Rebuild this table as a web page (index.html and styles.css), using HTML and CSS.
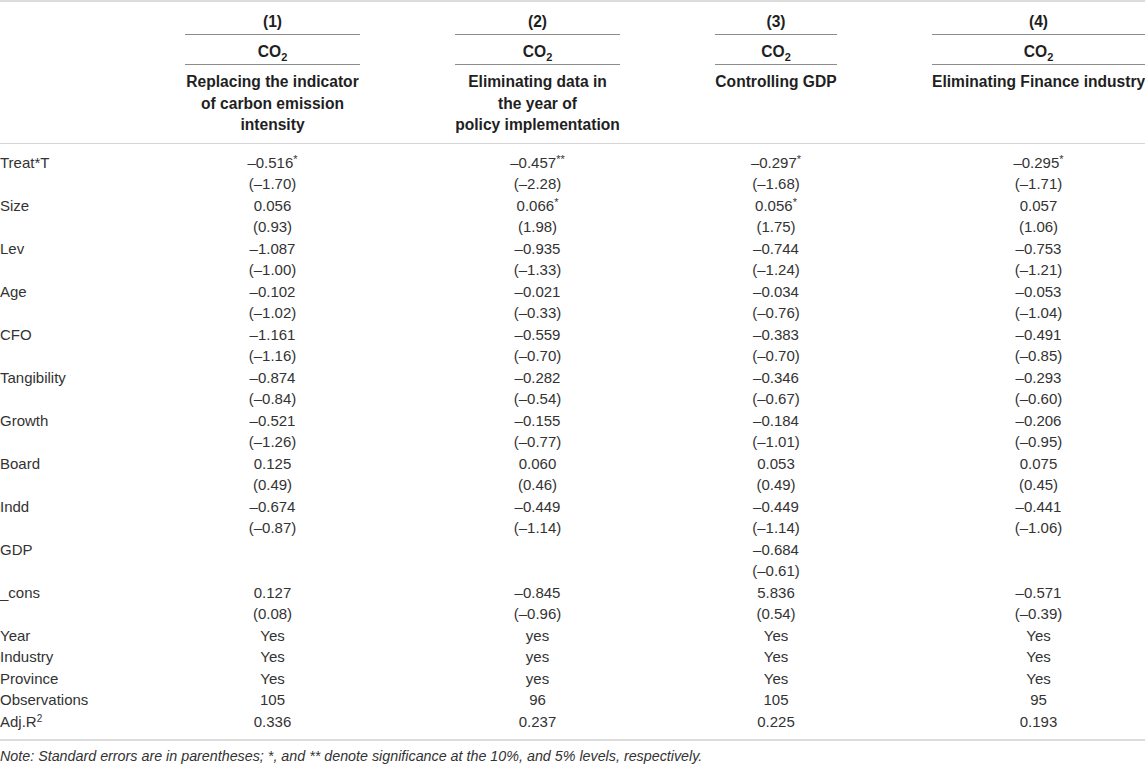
FILE: index.html
```
<!DOCTYPE html>
<html lang="en">
    <head>
        <meta charset="UTF-8">
        <title>Robustness tests</title>
        <link rel="stylesheet" href="styles.css">
    </head>
    <body>
        <div class="tbl">
            <div class="head">
                <div></div>
                <div class="num">(1)</div>
                <div class="num">(2)</div>
                <div class="num">(3)</div>
                <div class="num">(4)</div>

                <div></div>
                <div class="dep">CO<sub>2</sub></div>
                <div class="dep">CO<sub>2</sub></div>
                <div class="dep">CO<sub>2</sub></div>
                <div class="dep">CO<sub>2</sub></div>

                <div></div>
                <div class="lbl">Replacing the indicator<br>of carbon emission<br>intensity</div>
                <div class="lbl">Eliminating data in<br>the year of<br>policy implementation</div>
                <div class="lbl">Controlling GDP</div>
                <div class="lbl">Eliminating Finance industry</div>
            </div>

            <div class="body">
                <div class="stub">Treat*T</div><div>–0.516<sup>*</sup></div><div>–0.457<sup>**</sup></div><div>–0.297<sup>*</sup></div><div>–0.295<sup>*</sup></div>
                <div class="stub"></div><div>(–1.70)</div><div>(–2.28)</div><div>(–1.68)</div><div>(–1.71)</div>
                <div class="stub">Size</div><div>0.056</div><div>0.066<sup>*</sup></div><div>0.056<sup>*</sup></div><div>0.057</div>
                <div class="stub"></div><div>(0.93)</div><div>(1.98)</div><div>(1.75)</div><div>(1.06)</div>
                <div class="stub">Lev</div><div>–1.087</div><div>–0.935</div><div>–0.744</div><div>–0.753</div>
                <div class="stub"></div><div>(–1.00)</div><div>(–1.33)</div><div>(–1.24)</div><div>(–1.21)</div>
                <div class="stub">Age</div><div>–0.102</div><div>–0.021</div><div>–0.034</div><div>–0.053</div>
                <div class="stub"></div><div>(–1.02)</div><div>(–0.33)</div><div>(–0.76)</div><div>(–1.04)</div>
                <div class="stub">CFO</div><div>–1.161</div><div>–0.559</div><div>–0.383</div><div>–0.491</div>
                <div class="stub"></div><div>(–1.16)</div><div>(–0.70)</div><div>(–0.70)</div><div>(–0.85)</div>
                <div class="stub">Tangibility</div><div>–0.874</div><div>–0.282</div><div>–0.346</div><div>–0.293</div>
                <div class="stub"></div><div>(–0.84)</div><div>(–0.54)</div><div>(–0.67)</div><div>(–0.60)</div>
                <div class="stub">Growth</div><div>–0.521</div><div>–0.155</div><div>–0.184</div><div>–0.206</div>
                <div class="stub"></div><div>(–1.26)</div><div>(–0.77)</div><div>(–1.01)</div><div>(–0.95)</div>
                <div class="stub">Board</div><div>0.125</div><div>0.060</div><div>0.053</div><div>0.075</div>
                <div class="stub"></div><div>(0.49)</div><div>(0.46)</div><div>(0.49)</div><div>(0.45)</div>
                <div class="stub">Indd</div><div>–0.674</div><div>–0.449</div><div>–0.449</div><div>–0.441</div>
                <div class="stub"></div><div>(–0.87)</div><div>(–1.14)</div><div>(–1.14)</div><div>(–1.06)</div>
                <div class="stub">GDP</div><div></div><div></div><div>–0.684</div><div></div>
                <div class="stub"></div><div></div><div></div><div>(–0.61)</div><div></div>
                <div class="stub">_cons</div><div>0.127</div><div>–0.845</div><div>5.836</div><div>–0.571</div>
                <div class="stub"></div><div>(0.08)</div><div>(–0.96)</div><div>(0.54)</div><div>(–0.39)</div>
                <div class="stub">Year</div><div>Yes</div><div>yes</div><div>Yes</div><div>Yes</div>
                <div class="stub">Industry</div><div>Yes</div><div>yes</div><div>Yes</div><div>Yes</div>
                <div class="stub">Province</div><div>Yes</div><div>yes</div><div>Yes</div><div>Yes</div>
                <div class="stub">Observations</div><div>105</div><div>96</div><div>105</div><div>95</div>
                <div class="stub">Adj.R<sup class="pow">2</sup></div><div>0.336</div><div>0.237</div><div>0.225</div><div>0.193</div>
            </div>
        </div>
        <p class="foot">Note: Standard errors are in parentheses; *, and ** denote significance at the 10%, and 5% levels, respectively.</p>
    </body>
</html>
```

FILE: styles.css
```
body {
    margin: 0;
    font-family: 'Liberation Sans', Arial, Helvetica, sans-serif;
    font-size: 15px;
    line-height: 21.5px;
    color: #333;
    background: #fff;
}
.tbl {
    width: 1145px;
    border-top: 2px solid #dcdcdc;
    border-bottom: 2px solid #dcdcdc;
}
.head,
.body {
    display: grid;
    grid-template-columns: 90px 175px 165px 122px 213px;
    column-gap: 95px;
    text-align: center;
}
.head {
    font-size: 15.6px;
    font-weight: bold;
    color: #1f1f1f;
    padding-bottom: 7px;
    border-bottom: 1px solid #d6d6d6;
}
.num {
    padding: 9px 0 1px;
    border-bottom: 1px solid #8c8c8c;
}
.dep {
    padding: 6px 0 2px;
    border-bottom: 1px solid #8c8c8c;
}
.lbl {
    padding-top: 6px;
    white-space: nowrap;
}
sub {
    font-size: 11px;
    line-height: 0;
    vertical-align: -4px;
}
.body {
    padding: 8px 0 7px;
}
.stub {
    text-align: left;
    white-space: nowrap;
}
sup {
    font-size: 11px;
    line-height: 0;
    vertical-align: 5px;
}
.pow {
    font-size: 10px;
}
.foot {
    margin: 5px 0 0;
    font-style: italic;
    font-size: 14.3px;
    color: #333;
}
```
